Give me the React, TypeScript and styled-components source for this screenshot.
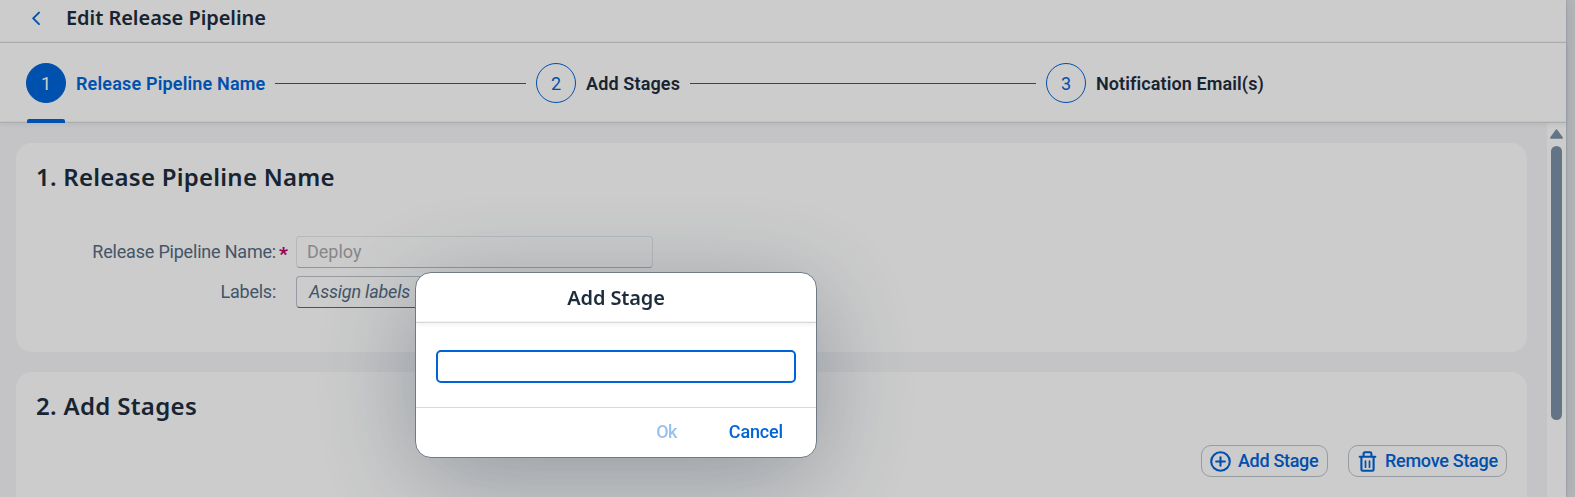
import React from "react";
import styled, { createGlobalStyle } from "styled-components";

const BLUE = "#0064d9";
const INK = "#1d2d3e";
const LABEL = "#556b82";
const HEADING = `"Noto Sans", "Open Sans", sans-serif`;

const Global = createGlobalStyle`
  *, *::before, *::after { box-sizing: border-box; }
  html, body { margin: 0; height: 100%; overflow: hidden; }
  body {
    font-family: Roboto, "Liberation Sans", sans-serif;
    font-size: 18px;
    line-height: 24px;
    color: ${INK};
    background: #e3e5e9;
  }
`;

const Text = styled.span<{ $ls?: number }>`
  letter-spacing: ${(p) => p.$ls ?? 0}px;
  white-space: nowrap;
`;

const Page = styled.div`
  position: relative;
  width: 1566px;
  height: 497px;
  display: flex;
  flex-direction: column;
  background: #f5f6f8;
  box-shadow: 0 0 2px rgba(34, 53, 72, 0.3), 0 0 18px rgba(34, 53, 72, 0.12);
`;

const Header = styled.header`
  flex: none;
  height: 43px;
  padding: 5px 0 0 30px;
  display: flex;
  align-items: flex-start;
  gap: 25px;
  background: #fff;
  border-bottom: 1px solid #d9d9d9;
  box-shadow: inset 0 -1px 0 #f6f6f6;
`;

const BackIcon = styled.svg`
  width: 11px;
  height: 14px;
  margin-top: 6px;
`;

const Title = styled.h1`
  margin: 0;
  font: 600 20px/26px ${HEADING};
`;

const Stepper = styled.nav`
  position: relative;
  z-index: 1;
  flex: none;
  height: 80px;
  padding: 20px 0 0 26px;
  display: flex;
  background: #fff;
  border-bottom: 1px solid #d9d9d9;
  box-shadow: 0 2px 4px rgba(34, 53, 72, 0.07), inset 0 -1px 0 #f4f4f4;
`;

const Step = styled.div<{ $active?: boolean }>`
  position: relative;
  flex: none;
  width: 510px;
  height: 60px;
  display: flex;
  align-items: flex-start;
  gap: 10px;
  font-weight: 600;
  color: ${(p) => (p.$active ? BLUE : INK)};
  ${(p) =>
    p.$active &&
    `&::after {
      content: "";
      position: absolute;
      left: 1px;
      bottom: 0;
      width: 38px;
      height: 4px;
      border-radius: 2px 2px 0 0;
      background: ${BLUE};
    }`}
`;

const Circle = styled.span<{ $active?: boolean }>`
  flex: none;
  width: 40px;
  height: 40px;
  border: 1px solid ${BLUE};
  border-radius: 50%;
  display: grid;
  place-items: center;
  font-weight: 400;
  font-size: 18px;
  padding-top: 2px;
  color: ${(p) => (p.$active ? "#fff" : BLUE)};
  background: ${(p) => (p.$active ? BLUE : "#fff")};
`;

const StepName = styled(Text)`
  line-height: 42px;
`;

const Line = styled.span`
  flex: 1;
  height: 1px;
  margin: 20px 10px 0 0;
  background: ${BLUE};
`;

const Body = styled.div`
  flex: 1;
  min-height: 0;
  display: flex;
`;

const Content = styled.main`
  flex: 1;
  padding: 20px 20px 0 16px;
  display: flex;
  flex-direction: column;
  gap: 20px;
  overflow: hidden;
`;

const Card = styled.section<{ $height: number }>`
  flex: none;
  height: ${(p) => p.$height}px;
  padding: 18px 20px;
  border-radius: 16px;
  background: #fff;
`;

const CardTitle = styled.h2`
  margin: 0;
  font: 600 24px/32px ${HEADING};
`;

const Form = styled.div`
  margin-top: 43px;
  display: grid;
  grid-template-columns: 240px 357px;
  grid-auto-rows: 32px;
  column-gap: 20px;
  row-gap: 8px;
`;

const Label = styled.label<{ $required?: boolean }>`
  display: flex;
  justify-content: flex-end;
  line-height: 32px;
  color: ${LABEL};
  ${(p) =>
    p.$required &&
    `&::after {
      content: "*";
      width: 0;
      text-indent: 3px;
      font: 900 19px/35px Roboto, sans-serif;
      color: #ba066c;
    }`}
`;

const Field = styled.div<{ $disabled?: boolean }>`
  height: 32px;
  padding: 0 ${(p) => (p.$disabled ? 10 : 12)}px;
  border: 1px solid ${(p) => (p.$disabled ? "#e4e7ea" : "#bcc3ca")};
  border-bottom-color: ${(p) => (p.$disabled ? "#b3bcc6" : LABEL)};
  border-radius: 4px;
  line-height: 30px;
  color: ${(p) => (p.$disabled ? "#a8aaad" : LABEL)};
  font-style: ${(p) => (p.$disabled ? "normal" : "italic")};
`;

const Toolbar = styled.div`
  margin-top: 23px;
  display: flex;
  justify-content: flex-end;
  gap: 20px;
`;

const Button = styled.button`
  height: 32px;
  padding: 0 8px;
  display: flex;
  align-items: center;
  border: 1px solid #bcc3ca;
  border-radius: 10px;
  background: transparent;
  color: ${BLUE};
  font: 500 18px/30px Roboto, sans-serif;
`;

const AddButton = styled(Button)`
  width: 127px;
  gap: 7px;
`;

const RemoveButton = styled(Button)`
  width: 159px;
  gap: 8px;
`;

const Scrollbar = styled.div`
  width: 19px;
  padding: 6px 3px 0;
  display: flex;
  flex-direction: column;
  align-items: center;
  background: #fff;
`;

const Thumb = styled.div`
  width: 11px;
  height: 274px;
  margin-top: 7px;
  border-radius: 6px;
  background: #7b91a8;
`;

const Overlay = styled.div`
  position: fixed;
  inset: 0;
  z-index: 2;
  display: flex;
  justify-content: center;
  align-items: flex-start;
  padding: 272px 343px 0 0;
  background: rgba(0, 0, 0, 0.2);
`;

const Dialog = styled.div`
  width: 402px;
  height: 186px;
  display: flex;
  flex-direction: column;
  overflow: hidden;
  border: 1px solid #6f7a86;
  border-radius: 16px;
  background: #fff;
  box-shadow: 0 20px 100px rgba(34, 53, 72, 0.34);
`;

const DialogHeader = styled.div`
  height: 50px;
  border-bottom: 1px solid #d9d9d9;
  box-shadow: 0 2px 4px rgba(34, 53, 72, 0.06), inset 0 -1px 0 #f4f4f4;
  text-align: center;
  font: 600 20px/49px ${HEADING};
`;

const DialogBody = styled.div`
  flex: 1;
  padding: 27px 20px 0;
`;

const Input = styled.input`
  display: block;
  width: 360px;
  height: 33px;
  border: 2px solid ${BLUE};
  border-radius: 5px;
  outline: none;
  background: #fff;
`;

const DialogFooter = styled.div`
  height: 50px;
  padding: 0 33px;
  display: flex;
  align-items: flex-start;
  justify-content: flex-end;
  gap: 52px;
  border-top: 1px solid #d9d9d9;
`;

const Action = styled.button<{ $disabled?: boolean }>`
  padding: 0;
  border: 0;
  background: none;
  color: ${BLUE};
  opacity: ${(p) => (p.$disabled ? 0.4 : 1)};
  font: 500 18px/47px Roboto, sans-serif;
`;

export default function App() {
  return (
    <>
      <Global />
      <Page>
        <Header>
          <BackIcon viewBox="0 0 11 14" fill="none" stroke={BLUE} strokeWidth="1.9" strokeLinecap="round" strokeLinejoin="round">
            <path d="M9 1.6 3.2 7.4 9 13.1" />
          </BackIcon>
          <Title><Text $ls={-0.05}>Edit Release Pipeline</Text></Title>
        </Header>
        <Stepper>
          <Step $active>
            <Circle $active>1</Circle>
            <StepName $ls={0.17}>Release Pipeline Name</StepName>
            <Line />
          </Step>
          <Step>
            <Circle>2</Circle>
            <StepName $ls={0.14}>Add Stages</StepName>
            <Line />
          </Step>
          <Step>
            <Circle>3</Circle>
            <StepName $ls={0.1}>Notification Email(s)</StepName>
          </Step>
        </Stepper>
        <Body>
          <Content>
            <Card $height={209}>
              <CardTitle><Text $ls={0.24}>1. Release Pipeline Name</Text></CardTitle>
              <Form>
                <Label $required><Text $ls={-0.2}>Release Pipeline Name:</Text></Label>
                <Field $disabled><Text>Deploy</Text></Field>
                <Label><Text $ls={-0.25}>Labels:</Text></Label>
                <Field><Text $ls={-0.2}>Assign labels</Text></Field>
              </Form>
            </Card>
            <Card $height={240}>
              <CardTitle><Text $ls={0.32}>2. Add Stages</Text></CardTitle>
              <Toolbar>
                <AddButton>
                  <svg width="21" height="21" viewBox="0 0 21 21" fill="none" stroke={BLUE} strokeWidth="2.1" strokeLinecap="round">
                    <circle cx="10.5" cy="10.5" r="9.3" />
                    <path d="M10.5 6.2v8.6M6.2 10.5h8.6" />
                  </svg>
                  <Text $ls={-0.32}>Add Stage</Text>
                </AddButton>
                <RemoveButton>
                  <svg width="20" height="21" viewBox="0 0 20 21" fill="none" stroke={BLUE} strokeWidth="2.1" strokeLinecap="round" strokeLinejoin="round">
                    <path d="M2.7 5.8h15.6M4.4 5.8v12.6q0 1.4 1.4 1.4h9.4q1.4 0 1.4-1.4v-12.6M6.6 5.6V2.7q0-1.4 1.4-1.4h5q1.4 0 1.4 1.4v2.9" />
                    <path d="M8.5 10v6.2M12.5 10v6.2" strokeWidth="1.7" />
                  </svg>
                  <Text $ls={-0.27}>Remove Stage</Text>
                </RemoveButton>
              </Toolbar>
            </Card>
          </Content>
          <Scrollbar>
            <svg width="13" height="10" viewBox="0 0 13 10" fill="#7b91a8" stroke="#7b91a8" strokeWidth="1.8" strokeLinejoin="round">
              <path d="M6.5 1.3 12 8.8H1Z" />
            </svg>
            <Thumb />
          </Scrollbar>
        </Body>
      </Page>
      <Overlay>
        <Dialog role="dialog">
          <DialogHeader><Text $ls={-0.15}>Add Stage</Text></DialogHeader>
          <DialogBody><Input aria-label="Stage name" /></DialogBody>
          <DialogFooter>
            <Action $disabled><Text $ls={-0.6}>Ok</Text></Action>
            <Action><Text $ls={-0.15}>Cancel</Text></Action>
          </DialogFooter>
        </Dialog>
      </Overlay>
    </>
  );
}
